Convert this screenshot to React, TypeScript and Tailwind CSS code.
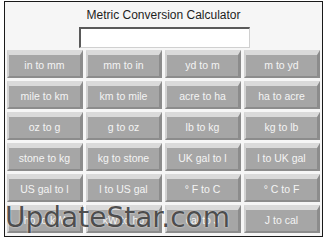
import React from 'react';

const CONVERSIONS = [
  'in to mm', 'mm to in', 'yd to m', 'm to yd',
  'mile to km', 'km to mile', 'acre to ha', 'ha to acre',
  'oz to g', 'g to oz', 'lb to kg', 'kg to lb',
  'stone to kg', 'kg to stone', 'UK gal to l', 'l to UK gal',
  'US gal to l', 'l to US gal', '° F to C', '° C to F',
  'hp to kW', 'kW to hp', 'cal to J', 'J to cal',
];

const App: React.FC = () => {
  return (
    <div className="relative w-[327px] h-[242px] bg-white font-['Liberation_Sans',Arial,sans-serif] overflow-hidden">
      <div className="ml-[4px] mt-[1px] w-[319px] h-[236px] border border-[#1a1a1a] bg-[#f6f6f6] flex flex-col items-center">
        <div className="mt-[6px] text-[12px] leading-[15px] text-[#1e1e1e]">Metric Conversion Calculator</div>
        <input
          type="text"
          className="mt-[4px] ml-[2px] w-[171px] h-[21px] bg-white outline-none border-t-2 border-l-2 border-r border-b border-t-[#5a5a5a] border-l-[#5a5a5a] border-r-[#d0d0d0] border-b-[#d0d0d0]"
        />
        <div className="mt-[2px] self-start ml-[2px] grid grid-cols-[repeat(4,76px)] auto-rows-[28px] gap-x-[3px] gap-y-[3px]">
          {CONVERSIONS.map((label) => (
            <button
              key={label}
              className="flex items-center justify-center bg-[#a6a6a6] text-[#f4f4f4] text-[10.5px] leading-none border-t-[5px] border-l-[2px] border-r-[3px] border-b-[2px] border-t-[#dadada] border-l-[#d2d2d2] border-r-[#8c8c8c] border-b-[#8c8c8c]"
            >
              {label}
            </button>
          ))}
        </div>
      </div>
      <div className="absolute left-[5px] top-[204px] text-[28px] leading-none font-['DejaVu_Sans',sans-serif] text-[#333333]/85 [text-shadow:0_0_2px_rgba(255,255,255,0.8)] pointer-events-none">
        UpdateStar.com
      </div>
    </div>
  );
};

export default App;
